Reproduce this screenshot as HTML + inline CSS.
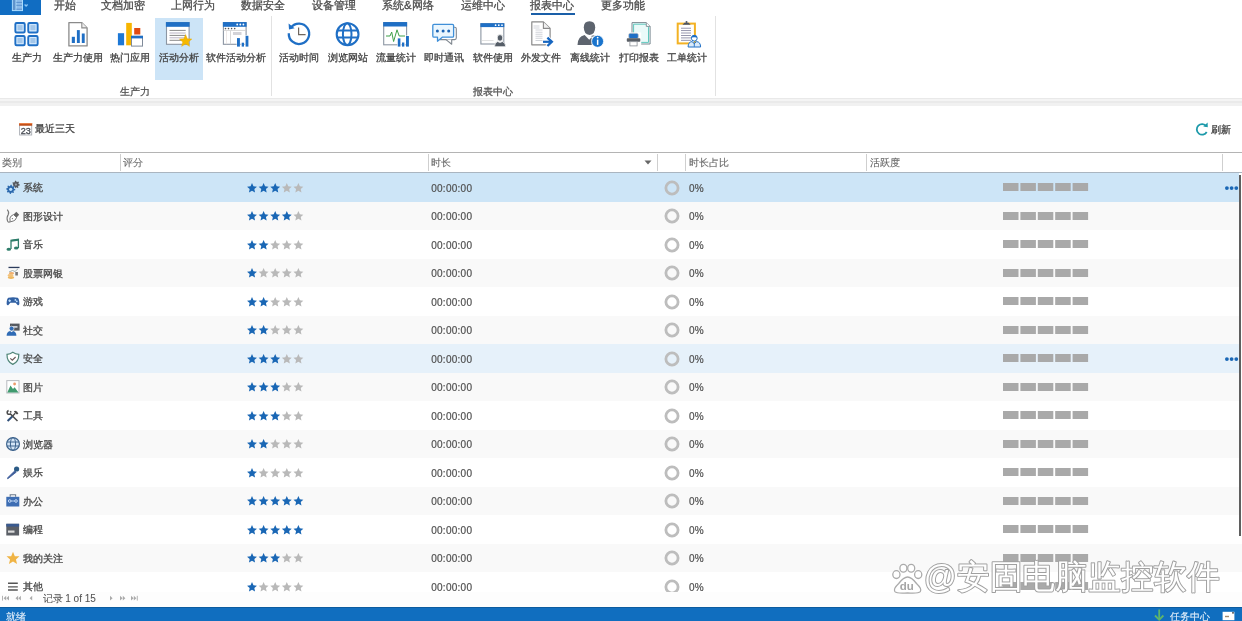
<!DOCTYPE html><html><head><meta charset="utf-8"><style>
*{margin:0;padding:0;box-sizing:border-box}
html,body{width:1242px;height:621px;overflow:hidden;background:#fff;font-family:"Liberation Sans", sans-serif;}
.t{position:absolute;white-space:nowrap;line-height:1;-webkit-text-stroke:0.3px currentColor}
.a{position:absolute}
svg{position:absolute;overflow:visible}
</style></head><body>
<div style="position:absolute;left:0;top:0;width:1242px;height:621px;will-change:transform"><div class="a" style="left:0;top:0;width:41px;height:15px;background:#116dc2"></div><svg style="left:0;top:0" width="41" height="15" viewBox="0 0 41 15"><rect x="12.4" y="-1" width="10.1" height="11.6" fill="#8dbbe9" stroke="#a9dcff" stroke-width="1"/><rect x="12.9" y="-1" width="3" height="11" fill="#5f93cc"/><path d="M16 -1V10.5" stroke="#b5e2ff" stroke-width="0.9"/><path d="M16.3 2.4H22M16.3 5.3H22M16.3 9.2H22" stroke="#4d86c6" stroke-width="0.8"/><path d="M24.6 4.4L26.1 5.9L27.6 4.4" fill="none" stroke="#8ac4f5" stroke-width="1.4"/></svg><div class="t" style="left:53.7px;top:-0.3px;font-size:11.3px;color:#4d4d4d;">开始</div><div class="t" style="left:101.4px;top:-0.3px;font-size:11.3px;color:#4d4d4d;">文档加密</div><div class="t" style="left:171.39999999999998px;top:-0.3px;font-size:11.3px;color:#4d4d4d;">上网行为</div><div class="t" style="left:241.2px;top:-0.3px;font-size:11.3px;color:#4d4d4d;">数据安全</div><div class="t" style="left:311.8px;top:-0.3px;font-size:11.3px;color:#4d4d4d;">设备管理</div><div class="t" style="left:382.09999999999997px;top:-0.3px;font-size:11.3px;color:#4d4d4d;">系统&amp;网络</div><div class="t" style="left:461.2px;top:-0.3px;font-size:11.3px;color:#4d4d4d;">运维中心</div><div class="t" style="left:530.2px;top:-0.3px;font-size:11.3px;color:#4d4d4d;">报表中心</div><div class="t" style="left:600.7px;top:-0.3px;font-size:11.3px;color:#4d4d4d;">更多功能</div><div class="a" style="left:531px;top:13px;width:44px;height:2px;background:#1a5fa8"></div><div class="a" style="left:155px;top:18px;width:48px;height:62px;background:#cce4f7"></div><svg style="left:10px;top:18px" width="34" height="32" viewBox="10 18 34 32"><rect x="15.4" y="23.1" width="9.3" height="9.3" rx="1.2" fill="#a9d0f5" stroke="#1f6fc5" stroke-width="2"/><rect x="17.0" y="24.700000000000003" width="6.1" height="6.1" fill="#a2c6ea" stroke="#dff0ff" stroke-width="0.8"/><rect x="28.3" y="23.1" width="9.3" height="9.3" rx="1.2" fill="#a9d0f5" stroke="#1f6fc5" stroke-width="2"/><rect x="29.900000000000002" y="24.700000000000003" width="6.1" height="6.1" fill="#a2c6ea" stroke="#dff0ff" stroke-width="0.8"/><rect x="15.4" y="36" width="9.3" height="9.3" rx="1.2" fill="#a9d0f5" stroke="#1f6fc5" stroke-width="2"/><rect x="17.0" y="37.6" width="6.1" height="6.1" fill="#a2c6ea" stroke="#dff0ff" stroke-width="0.8"/><rect x="28.3" y="36" width="9.3" height="9.3" rx="1.2" fill="#a9d0f5" stroke="#1f6fc5" stroke-width="2"/><rect x="29.900000000000002" y="37.6" width="6.1" height="6.1" fill="#a2c6ea" stroke="#dff0ff" stroke-width="0.8"/></svg><svg style="left:62px;top:18px" width="34" height="32" viewBox="62 18 34 32"><path d="M68.9 22.6H81.8L87.1 27.9V45.9H68.9Z" fill="#fff" stroke="#8a8a8a" stroke-width="1.3" stroke-linejoin="round"/><path d="M81.8 22.6V27.9H87.1" fill="#eee" stroke="#8a8a8a" stroke-width="1.1"/><rect x="71.8" y="36.8" width="3.1" height="6.2" fill="#1f6fc5"/><rect x="76.9" y="30.1" width="2.9" height="12.9" fill="#1f6fc5"/><rect x="81.8" y="33.5" width="2.9" height="9.5" fill="#1f6fc5"/></svg><svg style="left:112px;top:18px" width="34" height="32" viewBox="112 18 34 32"><rect x="117.9" y="33.2" width="6.2" height="12.1" fill="#1d78d6"/><rect x="126.2" y="22.9" width="5.6" height="22.4" fill="#f7b500"/><rect x="134.2" y="28" width="6.1" height="6.5" fill="#e04a12"/><rect x="131.5" y="36.3" width="11" height="9.8" fill="#fff" stroke="#7f8a99" stroke-width="1"/><rect x="131" y="35.8" width="12" height="2.6" fill="#1f6fc5"/></svg><svg style="left:161px;top:18px" width="34" height="32" viewBox="161 18 34 32"><rect x="166.5" y="22.6" width="22.6" height="21.7" fill="#fff" stroke="#8c96a3" stroke-width="1.1"/><rect x="165.9" y="22.1" width="23.7" height="4.7" fill="#1f6fc5"/><rect x="169.5" y="29.9" width="16.2" height="1" fill="#8a8a8a"/><rect x="169.5" y="32.5" width="16.2" height="1" fill="#b9b3c4"/><rect x="169.5" y="34.9" width="16.2" height="1" fill="#8a8a8a"/><rect x="169.5" y="37.3" width="16.2" height="1" fill="#b9b3c4"/><rect x="169.5" y="39.8" width="16.2" height="1" fill="#8a8a8a"/><path transform="translate(185.6 41) scale(0.68)" d="M0 -9.5L2.6 -3.2L9.2 -2.9L4.2 1.4L5.8 7.9L0 4.3L-5.8 7.9L-4.2 1.4L-9.2 -2.9L-2.6 -3.2Z" fill="#f6b800" stroke="#e8a800" stroke-width="0.6"/></svg><svg style="left:218px;top:18px" width="34" height="32" viewBox="218 18 34 32"><rect x="223.4" y="22.6" width="22.7" height="21.7" fill="#fff" stroke="#8c96a3" stroke-width="1.1"/><rect x="222.9" y="22.1" width="23.7" height="4.7" fill="#1f6fc5"/><circle cx="237.2" cy="24.5" r="0.9" fill="#fff"/><circle cx="240.3" cy="24.5" r="0.9" fill="#fff"/><circle cx="243.4" cy="24.5" r="0.9" fill="#fff"/><circle cx="225.5" cy="28.6" r="0.8" fill="#555"/><circle cx="228.5" cy="28.6" r="0.8" fill="#555"/><circle cx="231.6" cy="28.6" r="0.8" fill="#555"/><circle cx="234.7" cy="28.6" r="0.8" fill="#555"/><rect x="223.4" y="29.9" width="22.7" height="0.8" fill="#c9c9c9"/><rect x="230" y="30.5" width="0.8" height="13.7" fill="#cfcfcf"/><rect x="226.4" y="30.5" width="0.6" height="13.7" fill="#e3dbd9"/><rect x="233" y="32" width="8.5" height="3" fill="#d3d3d8"/><rect x="236.6" y="37.6" width="3.8" height="9.4" fill="#fff"/><rect x="241.2" y="42.2" width="3.3" height="4.8" fill="#fff"/><rect x="245.1" y="35.3" width="3.8" height="11.7" fill="#fff"/><rect x="237" y="38.1" width="2.9" height="8.5" fill="#1f6fc5"/><rect x="241.7" y="42.7" width="2.3" height="3.9" fill="#1f6fc5"/><rect x="245.6" y="35.8" width="2.8" height="10.8" fill="#1f6fc5"/></svg><svg style="left:282px;top:18px" width="34" height="32" viewBox="282 18 34 32"><path d="M288.8 33.2A10.2 10.2 0 1 0 290.9 27.6" fill="none" stroke="#1f6fc5" stroke-width="2.3"/><path d="M288.6 23.6L289.0 29.6L294.6 28.2Z" fill="#1f6fc5"/><path d="M298.6 27.4V34.6H305.6" fill="none" stroke="#6f665e" stroke-width="1.2"/></svg><svg style="left:330px;top:18px" width="34" height="32" viewBox="330 18 34 32"><circle cx="347.6" cy="34.2" r="10.9" fill="none" stroke="#1f6fc5" stroke-width="2.1"/><ellipse cx="347.2" cy="34.2" rx="4.3" ry="10.9" fill="none" stroke="#1f6fc5" stroke-width="2"/><path d="M337.5 30.4H357.8M337.5 37.4H357.8" stroke="#1f6fc5" stroke-width="2"/></svg><svg style="left:378px;top:18px" width="34" height="32" viewBox="378 18 34 32"><rect x="383.7" y="22.6" width="22.9" height="22.2" fill="#fff" stroke="#8c96a3" stroke-width="1.1"/><rect x="383.2" y="22.1" width="23.9" height="4.4" fill="#1f6fc5"/><path d="M386 36H390L391.7 32L393.6 41.5L397 29.8L399.2 36H405" fill="none" stroke="#3fa04a" stroke-width="1"/><rect x="397.3" y="37.9" width="3.6" height="9.2" fill="#fff"/><rect x="401.5" y="42" width="3.3" height="5.1" fill="#fff"/><rect x="405.5" y="35.5" width="3.9" height="11.6" fill="#fff"/><rect x="397.8" y="38.4" width="2.6" height="8.2" fill="#1f6fc5"/><rect x="402" y="42.5" width="2.3" height="4.1" fill="#1f6fc5"/><rect x="406" y="36" width="2.9" height="10.6" fill="#1f6fc5"/></svg><svg style="left:428px;top:18px" width="34" height="32" viewBox="428 18 34 32"><path d="M440 39.6H454.7Q456.3 39.6 456.3 38V28.8Q456.3 27.3 454.7 27.3H453" fill="none" stroke="#808890" stroke-width="1.1"/><path d="M446 39.6L451.7 44.2V39.6" fill="#fff" stroke="#808890" stroke-width="1.1" stroke-linejoin="round"/><path d="M434 24.4H452.4Q453.6 24.4 453.6 25.6V36Q453.6 37.2 452.4 37.2H442.3L437.5 41.2V37.2H434Q432.8 37.2 432.8 36V25.6Q432.8 24.4 434 24.4Z" fill="#eaf6fe" stroke="#3f8fd8" stroke-width="1.3" stroke-linejoin="round"/><circle cx="437.4" cy="31.1" r="1.5" fill="#1b63b3"/><circle cx="443.1" cy="31.1" r="1.5" fill="#1b63b3"/><circle cx="448.7" cy="31.1" r="1.5" fill="#1b63b3"/></svg><svg style="left:476px;top:18px" width="34" height="32" viewBox="476 18 34 32"><rect x="480.9" y="23.7" width="22.9" height="20.3" fill="#fff" stroke="#8c96a3" stroke-width="1.1"/><rect x="480.4" y="23.2" width="23.9" height="3.9" fill="#1f6fc5"/><circle cx="495.6" cy="25.2" r="0.85" fill="#fff"/><circle cx="498.8" cy="25.2" r="0.85" fill="#fff"/><circle cx="502" cy="25.2" r="0.85" fill="#fff"/><rect x="481.5" y="40.2" width="12" height="0.7" fill="#d7d7d7"/><path d="M494.4 46.8Q494.6 42.3 497.6 41.6L500 42.4L502.4 41.6Q505.6 42.3 505.8 46.8Z" fill="#555d67" stroke="#fff" stroke-width="0.8"/><ellipse cx="500" cy="37.9" rx="2.8" ry="3.3" fill="#555d67" stroke="#fff" stroke-width="0.8"/></svg><svg style="left:526px;top:18px" width="34" height="32" viewBox="526 18 34 32"><path d="M531.8 21.9H543.4L550.1 28.4V44.8H531.8Z" fill="#fff" stroke="#8a8a8a" stroke-width="1.2" stroke-linejoin="round"/><path d="M543.4 21.9V28.4H550.1" fill="#f0f0f0" stroke="#8a8a8a" stroke-width="1.1"/><rect x="533.5" y="25.6" width="6" height="0.8" fill="#c5c8cf"/><rect x="533.5" y="27.6" width="6" height="0.8" fill="#c5c8cf"/><rect x="535.5" y="29.6" width="7" height="0.8" fill="#c5c8cf"/><rect x="535.5" y="31.8" width="7" height="0.8" fill="#c5c8cf"/><rect x="535.5" y="33.8" width="7" height="0.8" fill="#c5c8cf"/><rect x="535.5" y="35.8" width="7" height="0.8" fill="#c5c8cf"/><rect x="535.5" y="37.8" width="7" height="0.8" fill="#c5c8cf"/><rect x="535.5" y="40" width="7" height="0.8" fill="#c5c8cf"/><path d="M543.2 41.8H551.5" stroke="#fff" stroke-width="4"/><path d="M546.8 37L551.5 41.8L546.8 46.6" fill="none" stroke="#fff" stroke-width="4"/><path d="M543 41.8H552" stroke="#1766c0" stroke-width="2.2"/><path d="M547.4 37.6L551.8 41.8L547.4 46" fill="none" stroke="#1766c0" stroke-width="2.4"/></svg><svg style="left:573px;top:18px" width="34" height="32" viewBox="573 18 34 32"><path d="M577.5 45Q577.5 36.4 584.6 34.9L589.2 39.7L591.7 37.2V45Z" fill="#5d646e"/><path d="M589.5 21.2Q595.2 21.2 595.2 27.3Q595.2 34.5 589.5 35Q583.8 34.5 583.8 27.3Q583.8 21.2 589.5 21.2Z" fill="#5d646e"/><path d="M591.5 36.3Q594.2 35.3 595.2 36.6" fill="none" stroke="#5d646e" stroke-width="1"/><circle cx="597.6" cy="41.3" r="6" fill="#1a74cc" stroke="#fff" stroke-width="0.8"/><rect x="596.9" y="39.6" width="1.5" height="5.3" fill="#fff"/><circle cx="597.65" cy="37.6" r="0.9" fill="#fff"/></svg><svg style="left:622px;top:18px" width="34" height="32" viewBox="622 18 34 32"><path d="M632 22.6H646.3L650.1 26.4V44H632Z" fill="#f2fbfb" stroke="#7d8a92" stroke-width="1"/><path d="M633.6 24.2H645.6L648.5 27.1V42.4H633.6Z" fill="#eafaf9" stroke="#5fc7bd" stroke-width="1"/><path d="M646.3 22.6V26.4H650.1" fill="#fff" stroke="#7d8a92" stroke-width="0.9"/><rect x="627.2" y="32.4" width="14" height="13.6" fill="#fff"/><rect x="628.7" y="33.3" width="9.6" height="5.3" rx="1.5" fill="#1f6fc5" stroke="#ccc" stroke-width="0.7"/><rect x="626.8" y="38.2" width="13.5" height="3.6" rx="0.8" fill="#5a5f66"/><rect x="629.9" y="41.7" width="7.2" height="4.2" fill="#fff" stroke="#8a8f96" stroke-width="0.8"/></svg><svg style="left:670px;top:18px" width="34" height="32" viewBox="670 18 34 32"><rect x="677.7" y="23.6" width="17.2" height="19.8" fill="#fff" stroke="#f3b224" stroke-width="2"/><path d="M682.4 24.8L684.5 22.7H688.6L690.7 24.8Z" fill="#4b5466"/><circle cx="686.5" cy="22" r="1" fill="#4b5466"/><rect x="681" y="27.75" width="10" height="0.9" fill="#8c8ca4"/><rect x="681" y="30.150000000000002" width="10" height="0.9" fill="#8c8ca4"/><rect x="681" y="32.55" width="10" height="0.9" fill="#8c8ca4"/><rect x="681" y="35.05" width="10" height="0.9" fill="#8c8ca4"/><rect x="681" y="37.449999999999996" width="10" height="0.9" fill="#8c8ca4"/><rect x="681" y="39.849999999999994" width="10" height="0.9" fill="#8c8ca4"/><path d="M688.1 47Q688.1 42 692 41.6L694.3 43.6L696.6 41.6Q700.6 42 700.6 47Z" fill="#dbeaf9" stroke="#1f6fc5" stroke-width="1"/><path d="M694.3 42.8V46.8" stroke="#1f6fc5" stroke-width="0.9"/><circle cx="694.3" cy="38.2" r="2.9" fill="#fff" stroke="#1f6fc5" stroke-width="1"/><path d="M691.4 37.6Q691.7 35 694.3 35.1Q696.9 35 697.2 37.6Q694.3 37 691.4 37.6Z" fill="#1f6fc5"/></svg><div class="t" style="left:-13.2px;width:80px;text-align:center;top:53.3px;font-size:10px;color:#444">生产力</div><div class="t" style="left:38px;width:80px;text-align:center;top:53.3px;font-size:10px;color:#444">生产力使用</div><div class="t" style="left:90px;width:80px;text-align:center;top:53.3px;font-size:10px;color:#444">热门应用</div><div class="t" style="left:138.6px;width:80px;text-align:center;top:53.3px;font-size:10px;color:#444">活动分析</div><div class="t" style="left:195.9px;width:80px;text-align:center;top:53.3px;font-size:10px;color:#444">软件活动分析</div><div class="t" style="left:258.9px;width:80px;text-align:center;top:53.3px;font-size:10px;color:#444">活动时间</div><div class="t" style="left:307.5px;width:80px;text-align:center;top:53.3px;font-size:10px;color:#444">浏览网站</div><div class="t" style="left:356.2px;width:80px;text-align:center;top:53.3px;font-size:10px;color:#444">流量统计</div><div class="t" style="left:404.4px;width:80px;text-align:center;top:53.3px;font-size:10px;color:#444">即时通讯</div><div class="t" style="left:453.2px;width:80px;text-align:center;top:53.3px;font-size:10px;color:#444">软件使用</div><div class="t" style="left:501.29999999999995px;width:80px;text-align:center;top:53.3px;font-size:10px;color:#444">外发文件</div><div class="t" style="left:550px;width:80px;text-align:center;top:53.3px;font-size:10px;color:#444">离线统计</div><div class="t" style="left:599.1px;width:80px;text-align:center;top:53.3px;font-size:10px;color:#444">打印报表</div><div class="t" style="left:646.9px;width:80px;text-align:center;top:53.3px;font-size:10px;color:#444">工单统计</div><div class="t" style="left:95px;width:80px;text-align:center;top:87.4px;font-size:10px;color:#555">生产力</div><div class="t" style="left:453.3px;width:80px;text-align:center;top:87.4px;font-size:10px;color:#555">报表中心</div><div class="a" style="left:271px;top:16px;width:1px;height:80px;background:#e2e2e2"></div><div class="a" style="left:715px;top:16px;width:1px;height:80px;background:#e2e2e2"></div><div class="a" style="left:0;top:98px;width:1242px;height:7.5px;background:linear-gradient(#e9e9e9 0,#e9e9e9 1.5px,#f4f4f4 1.5px,#f4f4f4 3.2px,#eaeaea 3.2px,#eaeaea 4.6px,#f1f1f1 4.6px)"></div><svg style="left:15px;top:118px" width="25" height="22" viewBox="15 118 25 22"><rect x="19.6" y="125" width="12.1" height="10" fill="#fff" stroke="#a9adb3" stroke-width="0.9"/><rect x="19.1" y="123.1" width="13.1" height="2.6" fill="#c4501a"/><rect x="19.1" y="123.1" width="13.1" height="0.8" fill="#f08a50"/><text x="25.7" y="134.4" font-size="9" text-anchor="middle" fill="#4a4f57" stroke="#4a4f57" stroke-width="0.35" font-family="Liberation Sans">23</text></svg><div class="t" style="left:35px;top:124.3px;font-size:9.8px;color:#444;">最近三天</div><svg style="left:1190px;top:118px" width="22" height="22" viewBox="1190 118 22 22"><path d="M1206.3 126.2A5.3 5.3 0 1 0 1206.7 132" fill="none" stroke="#1d9aaa" stroke-width="1.8"/><path d="M1203.3 126.6L1207.8 127.2L1207.6 122.6Z" fill="#1d9aaa"/></svg><div class="t" style="left:1211px;top:124.5px;font-size:9.8px;color:#444;">刷新</div><div class="a" style="left:0;top:152px;width:1242px;height:1px;background:#b4b4b4"></div><div class="a" style="left:0;top:172.2px;width:1242px;height:1.2px;background:#aab5c0"></div><div class="a" style="left:120px;top:154px;width:1px;height:17px;background:#cfcfcf"></div><div class="a" style="left:428px;top:154px;width:1px;height:17px;background:#cfcfcf"></div><div class="a" style="left:657px;top:154px;width:1px;height:17px;background:#cfcfcf"></div><div class="a" style="left:685px;top:154px;width:1px;height:17px;background:#cfcfcf"></div><div class="a" style="left:866px;top:154px;width:1px;height:17px;background:#cfcfcf"></div><div class="a" style="left:1222px;top:154px;width:1px;height:17px;background:#cfcfcf"></div><div class="t" style="left:2px;top:158.2px;font-size:10px;color:#666;-webkit-text-stroke:0.1px #666">类别</div><div class="t" style="left:123px;top:158.2px;font-size:10px;color:#666;-webkit-text-stroke:0.1px #666">评分</div><div class="t" style="left:431px;top:158.2px;font-size:10px;color:#666;-webkit-text-stroke:0.1px #666">时长</div><div class="t" style="left:689px;top:158.2px;font-size:10px;color:#666;-webkit-text-stroke:0.1px #666">时长占比</div><div class="t" style="left:870px;top:158.2px;font-size:10px;color:#666;-webkit-text-stroke:0.1px #666">活跃度</div><svg style="left:644px;top:160px" width="8" height="5"><path d="M0.5 0.5H7.5L4 4.6Z" fill="#666"/></svg><div class="a" style="left:0;top:173.0px;width:1242px;height:28.5px;background:#cde5f7"></div><svg style="left:3px;top:178px" width="20" height="20" viewBox="0 0 20 20"><polygon points="16.80,6.60 16.70,7.47 15.42,7.81 15.09,8.35 15.33,9.65 14.59,10.11 13.52,9.33 12.90,9.40 12.03,10.40 11.21,10.11 11.15,8.79 10.71,8.35 9.39,8.29 9.10,7.47 10.10,6.60 10.17,5.98 9.39,4.91 9.85,4.17 11.15,4.41 11.69,4.08 12.03,2.80 12.90,2.70 13.52,3.87 14.11,4.08 15.33,3.55 15.95,4.17 15.42,5.39 15.63,5.98" fill="#55595f"/><circle cx="12.9" cy="6.6" r="1.1" fill="#9aa3ad"/><circle cx="7.7" cy="11.3" r="4.6" fill="#cde5f7"/><polygon points="12.30,11.30 12.21,12.20 10.84,12.60 10.53,13.19 10.95,14.55 10.26,15.12 9.00,14.44 8.36,14.63 7.70,15.90 6.80,15.81 6.40,14.44 5.81,14.13 4.45,14.55 3.88,13.86 4.56,12.60 4.37,11.96 3.10,11.30 3.19,10.40 4.56,10.00 4.87,9.41 4.45,8.05 5.14,7.48 6.40,8.16 7.04,7.97 7.70,6.70 8.60,6.79 9.00,8.16 9.59,8.47 10.95,8.05 11.52,8.74 10.84,10.00 11.03,10.64" fill="#2b68ad"/><circle cx="7.7" cy="11.3" r="1.6" fill="#bfe3ff"/></svg><div class="t" style="left:23.3px;top:183.45px;font-size:10px;color:#4a4a4a;">系统</div><svg style="left:246.5px;top:182.95px" width="60" height="10"><path transform="translate(0.0,0)" d="M5.00 0.10L6.44 3.32L9.95 3.69L7.33 6.06L8.06 9.51L5.00 7.75L1.94 9.51L2.67 6.06L0.05 3.69L3.56 3.32Z" fill="#1a67b5"/><path transform="translate(11.6,0)" d="M5.00 0.10L6.44 3.32L9.95 3.69L7.33 6.06L8.06 9.51L5.00 7.75L1.94 9.51L2.67 6.06L0.05 3.69L3.56 3.32Z" fill="#1a67b5"/><path transform="translate(23.2,0)" d="M5.00 0.10L6.44 3.32L9.95 3.69L7.33 6.06L8.06 9.51L5.00 7.75L1.94 9.51L2.67 6.06L0.05 3.69L3.56 3.32Z" fill="#1a67b5"/><path transform="translate(34.8,0)" d="M5.00 0.10L6.44 3.32L9.95 3.69L7.33 6.06L8.06 9.51L5.00 7.75L1.94 9.51L2.67 6.06L0.05 3.69L3.56 3.32Z" fill="#b9b9b9"/><path transform="translate(46.4,0)" d="M5.00 0.10L6.44 3.32L9.95 3.69L7.33 6.06L8.06 9.51L5.00 7.75L1.94 9.51L2.67 6.06L0.05 3.69L3.56 3.32Z" fill="#b9b9b9"/></svg><div class="t" style="left:431.2px;top:183.85px;font-size:10px;color:#505050;letter-spacing:0.27px;-webkit-text-stroke:0.2px #505050">00:00:00</div><svg style="left:664px;top:179.75px" width="16" height="16"><circle cx="8" cy="8" r="6.1" fill="none" stroke="#bdbdbd" stroke-width="2.8"/></svg><div class="t" style="left:689px;top:183.85px;font-size:10px;color:#505050;letter-spacing:0.3px;-webkit-text-stroke:0.2px #505050">0%</div><svg style="left:1002.5px;top:183.25px" width="86" height="8"><rect x="0.0" y="0" width="15.5" height="8" fill="#a9a9a9"/><rect x="17.4" y="0" width="15.5" height="8" fill="#a9a9a9"/><rect x="34.8" y="0" width="15.5" height="8" fill="#a9a9a9"/><rect x="52.199999999999996" y="0" width="15.5" height="8" fill="#a9a9a9"/><rect x="69.6" y="0" width="15.5" height="8" fill="#a9a9a9"/></svg><svg style="left:1224px;top:186.05px" width="16" height="5"><circle cx="2.9" cy="2.1" r="1.9" fill="#1a67b5"/><circle cx="7.6" cy="2.1" r="1.9" fill="#1a67b5"/><circle cx="12.3" cy="2.1" r="1.9" fill="#1a67b5"/></svg><div class="a" style="left:0;top:201.5px;width:1242px;height:28.5px;background:#f9f9f9"></div><svg style="left:3px;top:206px" width="20" height="20" viewBox="0 0 20 20"><path d="M4.2 3.6Q6.6 6.2 5.2 8.6Q3.2 11.8 4.6 15.2Q5.6 16.8 7.2 15.8" fill="none" stroke="#777" stroke-width="1.1"/><path d="M7.2 15.8L6.9 12.1Q7.6 9.6 10.6 8.6L13.6 11.4Q12.6 14.6 10.1 15.1Z" fill="#fff" stroke="#777" stroke-width="1"/><path d="M10.6 8.6L13.3 5.8L16.2 8.8L13.6 11.4Z" fill="#666"/><circle cx="9.4" cy="12.6" r="0.7" fill="#777"/></svg><div class="t" style="left:23.3px;top:211.95px;font-size:10px;color:#4a4a4a;">图形设计</div><svg style="left:246.5px;top:211.45px" width="60" height="10"><path transform="translate(0.0,0)" d="M5.00 0.10L6.44 3.32L9.95 3.69L7.33 6.06L8.06 9.51L5.00 7.75L1.94 9.51L2.67 6.06L0.05 3.69L3.56 3.32Z" fill="#1a67b5"/><path transform="translate(11.6,0)" d="M5.00 0.10L6.44 3.32L9.95 3.69L7.33 6.06L8.06 9.51L5.00 7.75L1.94 9.51L2.67 6.06L0.05 3.69L3.56 3.32Z" fill="#1a67b5"/><path transform="translate(23.2,0)" d="M5.00 0.10L6.44 3.32L9.95 3.69L7.33 6.06L8.06 9.51L5.00 7.75L1.94 9.51L2.67 6.06L0.05 3.69L3.56 3.32Z" fill="#1a67b5"/><path transform="translate(34.8,0)" d="M5.00 0.10L6.44 3.32L9.95 3.69L7.33 6.06L8.06 9.51L5.00 7.75L1.94 9.51L2.67 6.06L0.05 3.69L3.56 3.32Z" fill="#1a67b5"/><path transform="translate(46.4,0)" d="M5.00 0.10L6.44 3.32L9.95 3.69L7.33 6.06L8.06 9.51L5.00 7.75L1.94 9.51L2.67 6.06L0.05 3.69L3.56 3.32Z" fill="#b9b9b9"/></svg><div class="t" style="left:431.2px;top:212.35px;font-size:10px;color:#505050;letter-spacing:0.27px;-webkit-text-stroke:0.2px #505050">00:00:00</div><svg style="left:664px;top:208.25px" width="16" height="16"><circle cx="8" cy="8" r="6.1" fill="none" stroke="#bdbdbd" stroke-width="2.8"/></svg><div class="t" style="left:689px;top:212.35px;font-size:10px;color:#505050;letter-spacing:0.3px;-webkit-text-stroke:0.2px #505050">0%</div><svg style="left:1002.5px;top:211.75px" width="86" height="8"><rect x="0.0" y="0" width="15.5" height="8" fill="#a9a9a9"/><rect x="17.4" y="0" width="15.5" height="8" fill="#a9a9a9"/><rect x="34.8" y="0" width="15.5" height="8" fill="#a9a9a9"/><rect x="52.199999999999996" y="0" width="15.5" height="8" fill="#a9a9a9"/><rect x="69.6" y="0" width="15.5" height="8" fill="#a9a9a9"/></svg><div class="a" style="left:0;top:230.0px;width:1242px;height:28.5px;background:#ffffff"></div><svg style="left:3px;top:235px" width="20" height="20" viewBox="0 0 20 20"><path d="M8 14V5.3L15.4 4.3V13" fill="none" stroke="#2e7d6a" stroke-width="1.3"/><path d="M8 5.8L15.4 4.8" stroke="#2e7d6a" stroke-width="1.8"/><ellipse cx="5.8" cy="14.3" rx="2.3" ry="1.5" fill="#2e7d6a"/><ellipse cx="13.2" cy="13.1" rx="2.3" ry="1.5" fill="#2e7d6a"/></svg><div class="t" style="left:23.3px;top:240.45px;font-size:10px;color:#4a4a4a;">音乐</div><svg style="left:246.5px;top:239.95px" width="60" height="10"><path transform="translate(0.0,0)" d="M5.00 0.10L6.44 3.32L9.95 3.69L7.33 6.06L8.06 9.51L5.00 7.75L1.94 9.51L2.67 6.06L0.05 3.69L3.56 3.32Z" fill="#1a67b5"/><path transform="translate(11.6,0)" d="M5.00 0.10L6.44 3.32L9.95 3.69L7.33 6.06L8.06 9.51L5.00 7.75L1.94 9.51L2.67 6.06L0.05 3.69L3.56 3.32Z" fill="#1a67b5"/><path transform="translate(23.2,0)" d="M5.00 0.10L6.44 3.32L9.95 3.69L7.33 6.06L8.06 9.51L5.00 7.75L1.94 9.51L2.67 6.06L0.05 3.69L3.56 3.32Z" fill="#b9b9b9"/><path transform="translate(34.8,0)" d="M5.00 0.10L6.44 3.32L9.95 3.69L7.33 6.06L8.06 9.51L5.00 7.75L1.94 9.51L2.67 6.06L0.05 3.69L3.56 3.32Z" fill="#b9b9b9"/><path transform="translate(46.4,0)" d="M5.00 0.10L6.44 3.32L9.95 3.69L7.33 6.06L8.06 9.51L5.00 7.75L1.94 9.51L2.67 6.06L0.05 3.69L3.56 3.32Z" fill="#b9b9b9"/></svg><div class="t" style="left:431.2px;top:240.85px;font-size:10px;color:#505050;letter-spacing:0.27px;-webkit-text-stroke:0.2px #505050">00:00:00</div><svg style="left:664px;top:236.75px" width="16" height="16"><circle cx="8" cy="8" r="6.1" fill="none" stroke="#bdbdbd" stroke-width="2.8"/></svg><div class="t" style="left:689px;top:240.85px;font-size:10px;color:#505050;letter-spacing:0.3px;-webkit-text-stroke:0.2px #505050">0%</div><svg style="left:1002.5px;top:240.25px" width="86" height="8"><rect x="0.0" y="0" width="15.5" height="8" fill="#a9a9a9"/><rect x="17.4" y="0" width="15.5" height="8" fill="#a9a9a9"/><rect x="34.8" y="0" width="15.5" height="8" fill="#a9a9a9"/><rect x="52.199999999999996" y="0" width="15.5" height="8" fill="#a9a9a9"/><rect x="69.6" y="0" width="15.5" height="8" fill="#a9a9a9"/></svg><div class="a" style="left:0;top:258.5px;width:1242px;height:28.5px;background:#f9f9f9"></div><svg style="left:3px;top:263px" width="20" height="20" viewBox="0 0 20 20"><rect x="5.5" y="3.8" width="11" height="1.3" fill="#2b3b5c"/><path d="M6 9L9.5 7.5L12 8.5L15 5.8" fill="none" stroke="#9aa" stroke-width="0.9"/><rect x="12.3" y="9" width="2.6" height="3.5" fill="#777"/><ellipse cx="8.5" cy="10.2" rx="2.6" ry="1.2" fill="#f0b070"/><ellipse cx="7.5" cy="12.4" rx="3" ry="1.3" fill="#f3c27a"/><ellipse cx="8" cy="14.6" rx="3.2" ry="1.4" fill="#eeb860"/></svg><div class="t" style="left:23.3px;top:268.95px;font-size:10px;color:#4a4a4a;">股票网银</div><svg style="left:246.5px;top:268.45px" width="60" height="10"><path transform="translate(0.0,0)" d="M5.00 0.10L6.44 3.32L9.95 3.69L7.33 6.06L8.06 9.51L5.00 7.75L1.94 9.51L2.67 6.06L0.05 3.69L3.56 3.32Z" fill="#1a67b5"/><path transform="translate(11.6,0)" d="M5.00 0.10L6.44 3.32L9.95 3.69L7.33 6.06L8.06 9.51L5.00 7.75L1.94 9.51L2.67 6.06L0.05 3.69L3.56 3.32Z" fill="#b9b9b9"/><path transform="translate(23.2,0)" d="M5.00 0.10L6.44 3.32L9.95 3.69L7.33 6.06L8.06 9.51L5.00 7.75L1.94 9.51L2.67 6.06L0.05 3.69L3.56 3.32Z" fill="#b9b9b9"/><path transform="translate(34.8,0)" d="M5.00 0.10L6.44 3.32L9.95 3.69L7.33 6.06L8.06 9.51L5.00 7.75L1.94 9.51L2.67 6.06L0.05 3.69L3.56 3.32Z" fill="#b9b9b9"/><path transform="translate(46.4,0)" d="M5.00 0.10L6.44 3.32L9.95 3.69L7.33 6.06L8.06 9.51L5.00 7.75L1.94 9.51L2.67 6.06L0.05 3.69L3.56 3.32Z" fill="#b9b9b9"/></svg><div class="t" style="left:431.2px;top:269.35px;font-size:10px;color:#505050;letter-spacing:0.27px;-webkit-text-stroke:0.2px #505050">00:00:00</div><svg style="left:664px;top:265.25px" width="16" height="16"><circle cx="8" cy="8" r="6.1" fill="none" stroke="#bdbdbd" stroke-width="2.8"/></svg><div class="t" style="left:689px;top:269.35px;font-size:10px;color:#505050;letter-spacing:0.3px;-webkit-text-stroke:0.2px #505050">0%</div><svg style="left:1002.5px;top:268.75px" width="86" height="8"><rect x="0.0" y="0" width="15.5" height="8" fill="#a9a9a9"/><rect x="17.4" y="0" width="15.5" height="8" fill="#a9a9a9"/><rect x="34.8" y="0" width="15.5" height="8" fill="#a9a9a9"/><rect x="52.199999999999996" y="0" width="15.5" height="8" fill="#a9a9a9"/><rect x="69.6" y="0" width="15.5" height="8" fill="#a9a9a9"/></svg><div class="a" style="left:0;top:287.0px;width:1242px;height:28.5px;background:#ffffff"></div><svg style="left:3px;top:292px" width="20" height="20" viewBox="0 0 20 20"><path d="M5.3 5.8Q10 4.8 14.7 5.8Q16.3 7 16.4 11.5Q16.3 13.8 14.8 13.2L12.6 10.8H7.4L5.2 13.2Q3.7 13.8 3.6 11.5Q3.7 7 5.3 5.8Z" fill="#3261a3"/><path d="M6.7 7.2L8.2 8.7L6.7 10.2L5.2 8.7Z" fill="#bfe0ff"/><circle cx="12.4" cy="7.9" r="0.9" fill="#bfe0ff"/><circle cx="13.8" cy="9.3" r="0.9" fill="#bfe0ff"/></svg><div class="t" style="left:23.3px;top:297.45px;font-size:10px;color:#4a4a4a;">游戏</div><svg style="left:246.5px;top:296.95px" width="60" height="10"><path transform="translate(0.0,0)" d="M5.00 0.10L6.44 3.32L9.95 3.69L7.33 6.06L8.06 9.51L5.00 7.75L1.94 9.51L2.67 6.06L0.05 3.69L3.56 3.32Z" fill="#1a67b5"/><path transform="translate(11.6,0)" d="M5.00 0.10L6.44 3.32L9.95 3.69L7.33 6.06L8.06 9.51L5.00 7.75L1.94 9.51L2.67 6.06L0.05 3.69L3.56 3.32Z" fill="#1a67b5"/><path transform="translate(23.2,0)" d="M5.00 0.10L6.44 3.32L9.95 3.69L7.33 6.06L8.06 9.51L5.00 7.75L1.94 9.51L2.67 6.06L0.05 3.69L3.56 3.32Z" fill="#b9b9b9"/><path transform="translate(34.8,0)" d="M5.00 0.10L6.44 3.32L9.95 3.69L7.33 6.06L8.06 9.51L5.00 7.75L1.94 9.51L2.67 6.06L0.05 3.69L3.56 3.32Z" fill="#b9b9b9"/><path transform="translate(46.4,0)" d="M5.00 0.10L6.44 3.32L9.95 3.69L7.33 6.06L8.06 9.51L5.00 7.75L1.94 9.51L2.67 6.06L0.05 3.69L3.56 3.32Z" fill="#b9b9b9"/></svg><div class="t" style="left:431.2px;top:297.85px;font-size:10px;color:#505050;letter-spacing:0.27px;-webkit-text-stroke:0.2px #505050">00:00:00</div><svg style="left:664px;top:293.75px" width="16" height="16"><circle cx="8" cy="8" r="6.1" fill="none" stroke="#bdbdbd" stroke-width="2.8"/></svg><div class="t" style="left:689px;top:297.85px;font-size:10px;color:#505050;letter-spacing:0.3px;-webkit-text-stroke:0.2px #505050">0%</div><svg style="left:1002.5px;top:297.25px" width="86" height="8"><rect x="0.0" y="0" width="15.5" height="8" fill="#a9a9a9"/><rect x="17.4" y="0" width="15.5" height="8" fill="#a9a9a9"/><rect x="34.8" y="0" width="15.5" height="8" fill="#a9a9a9"/><rect x="52.199999999999996" y="0" width="15.5" height="8" fill="#a9a9a9"/><rect x="69.6" y="0" width="15.5" height="8" fill="#a9a9a9"/></svg><div class="a" style="left:0;top:315.5px;width:1242px;height:28.5px;background:#f9f9f9"></div><svg style="left:3px;top:320px" width="20" height="20" viewBox="0 0 20 20"><rect x="7" y="3.6" width="9.6" height="7" fill="#55595f"/><rect x="9.5" y="6" width="5" height="1.8" fill="#c9ced6"/><path d="M3.6 15.8Q3.8 11.4 7.2 11L8.6 12.2L10 11Q13.2 11.4 13.4 15.8Z" fill="#2f6bb5"/><circle cx="8.6" cy="8.6" r="2.4" fill="#2f6bb5" stroke="#fff" stroke-width="0.6"/></svg><div class="t" style="left:23.3px;top:325.95px;font-size:10px;color:#4a4a4a;">社交</div><svg style="left:246.5px;top:325.45px" width="60" height="10"><path transform="translate(0.0,0)" d="M5.00 0.10L6.44 3.32L9.95 3.69L7.33 6.06L8.06 9.51L5.00 7.75L1.94 9.51L2.67 6.06L0.05 3.69L3.56 3.32Z" fill="#1a67b5"/><path transform="translate(11.6,0)" d="M5.00 0.10L6.44 3.32L9.95 3.69L7.33 6.06L8.06 9.51L5.00 7.75L1.94 9.51L2.67 6.06L0.05 3.69L3.56 3.32Z" fill="#1a67b5"/><path transform="translate(23.2,0)" d="M5.00 0.10L6.44 3.32L9.95 3.69L7.33 6.06L8.06 9.51L5.00 7.75L1.94 9.51L2.67 6.06L0.05 3.69L3.56 3.32Z" fill="#b9b9b9"/><path transform="translate(34.8,0)" d="M5.00 0.10L6.44 3.32L9.95 3.69L7.33 6.06L8.06 9.51L5.00 7.75L1.94 9.51L2.67 6.06L0.05 3.69L3.56 3.32Z" fill="#b9b9b9"/><path transform="translate(46.4,0)" d="M5.00 0.10L6.44 3.32L9.95 3.69L7.33 6.06L8.06 9.51L5.00 7.75L1.94 9.51L2.67 6.06L0.05 3.69L3.56 3.32Z" fill="#b9b9b9"/></svg><div class="t" style="left:431.2px;top:326.35px;font-size:10px;color:#505050;letter-spacing:0.27px;-webkit-text-stroke:0.2px #505050">00:00:00</div><svg style="left:664px;top:322.25px" width="16" height="16"><circle cx="8" cy="8" r="6.1" fill="none" stroke="#bdbdbd" stroke-width="2.8"/></svg><div class="t" style="left:689px;top:326.35px;font-size:10px;color:#505050;letter-spacing:0.3px;-webkit-text-stroke:0.2px #505050">0%</div><svg style="left:1002.5px;top:325.75px" width="86" height="8"><rect x="0.0" y="0" width="15.5" height="8" fill="#a9a9a9"/><rect x="17.4" y="0" width="15.5" height="8" fill="#a9a9a9"/><rect x="34.8" y="0" width="15.5" height="8" fill="#a9a9a9"/><rect x="52.199999999999996" y="0" width="15.5" height="8" fill="#a9a9a9"/><rect x="69.6" y="0" width="15.5" height="8" fill="#a9a9a9"/></svg><div class="a" style="left:0;top:344.0px;width:1242px;height:28.5px;background:#e6f1fa"></div><svg style="left:3px;top:349px" width="20" height="20" viewBox="0 0 20 20"><path d="M9.8 3.2Q12.5 5 15.8 5.4Q16 12.5 9.8 15.4Q3.8 12.5 4 5.4Q7.2 5 9.8 3.2Z" fill="#fff" stroke="#4f8577" stroke-width="1.2"/><path d="M7.3 9.4L9.3 11.2L12.6 8" fill="none" stroke="#6d5a5a" stroke-width="1.2"/></svg><div class="t" style="left:23.3px;top:354.45px;font-size:10px;color:#4a4a4a;">安全</div><svg style="left:246.5px;top:353.95px" width="60" height="10"><path transform="translate(0.0,0)" d="M5.00 0.10L6.44 3.32L9.95 3.69L7.33 6.06L8.06 9.51L5.00 7.75L1.94 9.51L2.67 6.06L0.05 3.69L3.56 3.32Z" fill="#1a67b5"/><path transform="translate(11.6,0)" d="M5.00 0.10L6.44 3.32L9.95 3.69L7.33 6.06L8.06 9.51L5.00 7.75L1.94 9.51L2.67 6.06L0.05 3.69L3.56 3.32Z" fill="#1a67b5"/><path transform="translate(23.2,0)" d="M5.00 0.10L6.44 3.32L9.95 3.69L7.33 6.06L8.06 9.51L5.00 7.75L1.94 9.51L2.67 6.06L0.05 3.69L3.56 3.32Z" fill="#1a67b5"/><path transform="translate(34.8,0)" d="M5.00 0.10L6.44 3.32L9.95 3.69L7.33 6.06L8.06 9.51L5.00 7.75L1.94 9.51L2.67 6.06L0.05 3.69L3.56 3.32Z" fill="#b9b9b9"/><path transform="translate(46.4,0)" d="M5.00 0.10L6.44 3.32L9.95 3.69L7.33 6.06L8.06 9.51L5.00 7.75L1.94 9.51L2.67 6.06L0.05 3.69L3.56 3.32Z" fill="#b9b9b9"/></svg><div class="t" style="left:431.2px;top:354.85px;font-size:10px;color:#505050;letter-spacing:0.27px;-webkit-text-stroke:0.2px #505050">00:00:00</div><svg style="left:664px;top:350.75px" width="16" height="16"><circle cx="8" cy="8" r="6.1" fill="none" stroke="#bdbdbd" stroke-width="2.8"/></svg><div class="t" style="left:689px;top:354.85px;font-size:10px;color:#505050;letter-spacing:0.3px;-webkit-text-stroke:0.2px #505050">0%</div><svg style="left:1002.5px;top:354.25px" width="86" height="8"><rect x="0.0" y="0" width="15.5" height="8" fill="#a9a9a9"/><rect x="17.4" y="0" width="15.5" height="8" fill="#a9a9a9"/><rect x="34.8" y="0" width="15.5" height="8" fill="#a9a9a9"/><rect x="52.199999999999996" y="0" width="15.5" height="8" fill="#a9a9a9"/><rect x="69.6" y="0" width="15.5" height="8" fill="#a9a9a9"/></svg><svg style="left:1224px;top:357.05px" width="16" height="5"><circle cx="2.9" cy="2.1" r="1.9" fill="#1a67b5"/><circle cx="7.6" cy="2.1" r="1.9" fill="#1a67b5"/><circle cx="12.3" cy="2.1" r="1.9" fill="#1a67b5"/></svg><div class="a" style="left:0;top:372.5px;width:1242px;height:28.5px;background:#f9f9f9"></div><svg style="left:3px;top:377px" width="20" height="20" viewBox="0 0 20 20"><rect x="3.8" y="3.6" width="12.2" height="12.4" fill="#fff" stroke="#b9bcc0" stroke-width="1"/><path d="M4.3 15.5L7.5 8.5L10 12L11.6 10.2L15.5 15.5Z" fill="#3f9a6e"/><circle cx="11.6" cy="7" r="1.4" fill="#ec9a6a"/></svg><div class="t" style="left:23.3px;top:382.95px;font-size:10px;color:#4a4a4a;">图片</div><svg style="left:246.5px;top:382.45px" width="60" height="10"><path transform="translate(0.0,0)" d="M5.00 0.10L6.44 3.32L9.95 3.69L7.33 6.06L8.06 9.51L5.00 7.75L1.94 9.51L2.67 6.06L0.05 3.69L3.56 3.32Z" fill="#1a67b5"/><path transform="translate(11.6,0)" d="M5.00 0.10L6.44 3.32L9.95 3.69L7.33 6.06L8.06 9.51L5.00 7.75L1.94 9.51L2.67 6.06L0.05 3.69L3.56 3.32Z" fill="#1a67b5"/><path transform="translate(23.2,0)" d="M5.00 0.10L6.44 3.32L9.95 3.69L7.33 6.06L8.06 9.51L5.00 7.75L1.94 9.51L2.67 6.06L0.05 3.69L3.56 3.32Z" fill="#1a67b5"/><path transform="translate(34.8,0)" d="M5.00 0.10L6.44 3.32L9.95 3.69L7.33 6.06L8.06 9.51L5.00 7.75L1.94 9.51L2.67 6.06L0.05 3.69L3.56 3.32Z" fill="#b9b9b9"/><path transform="translate(46.4,0)" d="M5.00 0.10L6.44 3.32L9.95 3.69L7.33 6.06L8.06 9.51L5.00 7.75L1.94 9.51L2.67 6.06L0.05 3.69L3.56 3.32Z" fill="#b9b9b9"/></svg><div class="t" style="left:431.2px;top:383.35px;font-size:10px;color:#505050;letter-spacing:0.27px;-webkit-text-stroke:0.2px #505050">00:00:00</div><svg style="left:664px;top:379.25px" width="16" height="16"><circle cx="8" cy="8" r="6.1" fill="none" stroke="#bdbdbd" stroke-width="2.8"/></svg><div class="t" style="left:689px;top:383.35px;font-size:10px;color:#505050;letter-spacing:0.3px;-webkit-text-stroke:0.2px #505050">0%</div><svg style="left:1002.5px;top:382.75px" width="86" height="8"><rect x="0.0" y="0" width="15.5" height="8" fill="#a9a9a9"/><rect x="17.4" y="0" width="15.5" height="8" fill="#a9a9a9"/><rect x="34.8" y="0" width="15.5" height="8" fill="#a9a9a9"/><rect x="52.199999999999996" y="0" width="15.5" height="8" fill="#a9a9a9"/><rect x="69.6" y="0" width="15.5" height="8" fill="#a9a9a9"/></svg><div class="a" style="left:0;top:401.0px;width:1242px;height:28.5px;background:#ffffff"></div><svg style="left:3px;top:406px" width="20" height="20" viewBox="0 0 20 20"><path d="M5.6 4.5Q3.6 5.4 4.4 7.6Q5.8 8.8 7.4 8L14.5 15" fill="none" stroke="#4b4b4b" stroke-width="1.5"/><path d="M7.2 5.2L8.3 6.5" stroke="#4b4b4b" stroke-width="1.4"/><path d="M10.8 5.2Q13.6 3.8 15.4 7.4L14 8.6L12.6 7.4Z" fill="#4b4b4b"/><path d="M12.2 7.2L9.5 10.2" stroke="#4b4b4b" stroke-width="1.4"/><path d="M9.3 10.6L4.6 15" stroke="#2f4f78" stroke-width="2"/></svg><div class="t" style="left:23.3px;top:411.45px;font-size:10px;color:#4a4a4a;">工具</div><svg style="left:246.5px;top:410.95px" width="60" height="10"><path transform="translate(0.0,0)" d="M5.00 0.10L6.44 3.32L9.95 3.69L7.33 6.06L8.06 9.51L5.00 7.75L1.94 9.51L2.67 6.06L0.05 3.69L3.56 3.32Z" fill="#1a67b5"/><path transform="translate(11.6,0)" d="M5.00 0.10L6.44 3.32L9.95 3.69L7.33 6.06L8.06 9.51L5.00 7.75L1.94 9.51L2.67 6.06L0.05 3.69L3.56 3.32Z" fill="#1a67b5"/><path transform="translate(23.2,0)" d="M5.00 0.10L6.44 3.32L9.95 3.69L7.33 6.06L8.06 9.51L5.00 7.75L1.94 9.51L2.67 6.06L0.05 3.69L3.56 3.32Z" fill="#1a67b5"/><path transform="translate(34.8,0)" d="M5.00 0.10L6.44 3.32L9.95 3.69L7.33 6.06L8.06 9.51L5.00 7.75L1.94 9.51L2.67 6.06L0.05 3.69L3.56 3.32Z" fill="#b9b9b9"/><path transform="translate(46.4,0)" d="M5.00 0.10L6.44 3.32L9.95 3.69L7.33 6.06L8.06 9.51L5.00 7.75L1.94 9.51L2.67 6.06L0.05 3.69L3.56 3.32Z" fill="#b9b9b9"/></svg><div class="t" style="left:431.2px;top:411.85px;font-size:10px;color:#505050;letter-spacing:0.27px;-webkit-text-stroke:0.2px #505050">00:00:00</div><svg style="left:664px;top:407.75px" width="16" height="16"><circle cx="8" cy="8" r="6.1" fill="none" stroke="#bdbdbd" stroke-width="2.8"/></svg><div class="t" style="left:689px;top:411.85px;font-size:10px;color:#505050;letter-spacing:0.3px;-webkit-text-stroke:0.2px #505050">0%</div><svg style="left:1002.5px;top:411.25px" width="86" height="8"><rect x="0.0" y="0" width="15.5" height="8" fill="#a9a9a9"/><rect x="17.4" y="0" width="15.5" height="8" fill="#a9a9a9"/><rect x="34.8" y="0" width="15.5" height="8" fill="#a9a9a9"/><rect x="52.199999999999996" y="0" width="15.5" height="8" fill="#a9a9a9"/><rect x="69.6" y="0" width="15.5" height="8" fill="#a9a9a9"/></svg><div class="a" style="left:0;top:429.5px;width:1242px;height:28.5px;background:#f9f9f9"></div><svg style="left:3px;top:434px" width="20" height="20" viewBox="0 0 20 20"><circle cx="10" cy="10" r="6.4" fill="#d5e6f7" stroke="#3d638c" stroke-width="1.2"/><ellipse cx="10" cy="10" rx="2.6" ry="6.4" fill="none" stroke="#3d638c" stroke-width="1"/><path d="M3.8 8H16.2M3.8 12H16.2" stroke="#3d638c" stroke-width="1"/></svg><div class="t" style="left:23.3px;top:439.95px;font-size:10px;color:#4a4a4a;">浏览器</div><svg style="left:246.5px;top:439.45px" width="60" height="10"><path transform="translate(0.0,0)" d="M5.00 0.10L6.44 3.32L9.95 3.69L7.33 6.06L8.06 9.51L5.00 7.75L1.94 9.51L2.67 6.06L0.05 3.69L3.56 3.32Z" fill="#1a67b5"/><path transform="translate(11.6,0)" d="M5.00 0.10L6.44 3.32L9.95 3.69L7.33 6.06L8.06 9.51L5.00 7.75L1.94 9.51L2.67 6.06L0.05 3.69L3.56 3.32Z" fill="#1a67b5"/><path transform="translate(23.2,0)" d="M5.00 0.10L6.44 3.32L9.95 3.69L7.33 6.06L8.06 9.51L5.00 7.75L1.94 9.51L2.67 6.06L0.05 3.69L3.56 3.32Z" fill="#b9b9b9"/><path transform="translate(34.8,0)" d="M5.00 0.10L6.44 3.32L9.95 3.69L7.33 6.06L8.06 9.51L5.00 7.75L1.94 9.51L2.67 6.06L0.05 3.69L3.56 3.32Z" fill="#b9b9b9"/><path transform="translate(46.4,0)" d="M5.00 0.10L6.44 3.32L9.95 3.69L7.33 6.06L8.06 9.51L5.00 7.75L1.94 9.51L2.67 6.06L0.05 3.69L3.56 3.32Z" fill="#b9b9b9"/></svg><div class="t" style="left:431.2px;top:440.35px;font-size:10px;color:#505050;letter-spacing:0.27px;-webkit-text-stroke:0.2px #505050">00:00:00</div><svg style="left:664px;top:436.25px" width="16" height="16"><circle cx="8" cy="8" r="6.1" fill="none" stroke="#bdbdbd" stroke-width="2.8"/></svg><div class="t" style="left:689px;top:440.35px;font-size:10px;color:#505050;letter-spacing:0.3px;-webkit-text-stroke:0.2px #505050">0%</div><svg style="left:1002.5px;top:439.75px" width="86" height="8"><rect x="0.0" y="0" width="15.5" height="8" fill="#a9a9a9"/><rect x="17.4" y="0" width="15.5" height="8" fill="#a9a9a9"/><rect x="34.8" y="0" width="15.5" height="8" fill="#a9a9a9"/><rect x="52.199999999999996" y="0" width="15.5" height="8" fill="#a9a9a9"/><rect x="69.6" y="0" width="15.5" height="8" fill="#a9a9a9"/></svg><div class="a" style="left:0;top:458.0px;width:1242px;height:28.5px;background:#ffffff"></div><svg style="left:3px;top:463px" width="20" height="20" viewBox="0 0 20 20"><path d="M11.8 7.8L13.2 9.2L4.8 15.8L4.2 15.2Z" fill="#3d5d9a" stroke="#3d5d9a" stroke-width="0.8" stroke-linejoin="round"/><circle cx="13.6" cy="6" r="2.6" fill="#2b5b86"/></svg><div class="t" style="left:23.3px;top:468.45px;font-size:10px;color:#4a4a4a;">娱乐</div><svg style="left:246.5px;top:467.95px" width="60" height="10"><path transform="translate(0.0,0)" d="M5.00 0.10L6.44 3.32L9.95 3.69L7.33 6.06L8.06 9.51L5.00 7.75L1.94 9.51L2.67 6.06L0.05 3.69L3.56 3.32Z" fill="#1a67b5"/><path transform="translate(11.6,0)" d="M5.00 0.10L6.44 3.32L9.95 3.69L7.33 6.06L8.06 9.51L5.00 7.75L1.94 9.51L2.67 6.06L0.05 3.69L3.56 3.32Z" fill="#b9b9b9"/><path transform="translate(23.2,0)" d="M5.00 0.10L6.44 3.32L9.95 3.69L7.33 6.06L8.06 9.51L5.00 7.75L1.94 9.51L2.67 6.06L0.05 3.69L3.56 3.32Z" fill="#b9b9b9"/><path transform="translate(34.8,0)" d="M5.00 0.10L6.44 3.32L9.95 3.69L7.33 6.06L8.06 9.51L5.00 7.75L1.94 9.51L2.67 6.06L0.05 3.69L3.56 3.32Z" fill="#b9b9b9"/><path transform="translate(46.4,0)" d="M5.00 0.10L6.44 3.32L9.95 3.69L7.33 6.06L8.06 9.51L5.00 7.75L1.94 9.51L2.67 6.06L0.05 3.69L3.56 3.32Z" fill="#b9b9b9"/></svg><div class="t" style="left:431.2px;top:468.85px;font-size:10px;color:#505050;letter-spacing:0.27px;-webkit-text-stroke:0.2px #505050">00:00:00</div><svg style="left:664px;top:464.75px" width="16" height="16"><circle cx="8" cy="8" r="6.1" fill="none" stroke="#bdbdbd" stroke-width="2.8"/></svg><div class="t" style="left:689px;top:468.85px;font-size:10px;color:#505050;letter-spacing:0.3px;-webkit-text-stroke:0.2px #505050">0%</div><svg style="left:1002.5px;top:468.25px" width="86" height="8"><rect x="0.0" y="0" width="15.5" height="8" fill="#a9a9a9"/><rect x="17.4" y="0" width="15.5" height="8" fill="#a9a9a9"/><rect x="34.8" y="0" width="15.5" height="8" fill="#a9a9a9"/><rect x="52.199999999999996" y="0" width="15.5" height="8" fill="#a9a9a9"/><rect x="69.6" y="0" width="15.5" height="8" fill="#a9a9a9"/></svg><div class="a" style="left:0;top:486.5px;width:1242px;height:28.5px;background:#f9f9f9"></div><svg style="left:3px;top:491px" width="20" height="20" viewBox="0 0 20 20"><path d="M7.2 5.8V3.8H12.6V5.8" fill="none" stroke="#6b7a8c" stroke-width="1.1"/><rect x="3.3" y="5.8" width="13" height="9.7" fill="#3d6db3"/><circle cx="6.7" cy="10" r="1.3" fill="none" stroke="#cfe3fa" stroke-width="0.9"/><circle cx="13" cy="10" r="1.3" fill="none" stroke="#cfe3fa" stroke-width="0.9"/><path d="M8 10H11.7" stroke="#cfe3fa" stroke-width="0.8"/></svg><div class="t" style="left:23.3px;top:496.95px;font-size:10px;color:#4a4a4a;">办公</div><svg style="left:246.5px;top:496.45px" width="60" height="10"><path transform="translate(0.0,0)" d="M5.00 0.10L6.44 3.32L9.95 3.69L7.33 6.06L8.06 9.51L5.00 7.75L1.94 9.51L2.67 6.06L0.05 3.69L3.56 3.32Z" fill="#1a67b5"/><path transform="translate(11.6,0)" d="M5.00 0.10L6.44 3.32L9.95 3.69L7.33 6.06L8.06 9.51L5.00 7.75L1.94 9.51L2.67 6.06L0.05 3.69L3.56 3.32Z" fill="#1a67b5"/><path transform="translate(23.2,0)" d="M5.00 0.10L6.44 3.32L9.95 3.69L7.33 6.06L8.06 9.51L5.00 7.75L1.94 9.51L2.67 6.06L0.05 3.69L3.56 3.32Z" fill="#1a67b5"/><path transform="translate(34.8,0)" d="M5.00 0.10L6.44 3.32L9.95 3.69L7.33 6.06L8.06 9.51L5.00 7.75L1.94 9.51L2.67 6.06L0.05 3.69L3.56 3.32Z" fill="#1a67b5"/><path transform="translate(46.4,0)" d="M5.00 0.10L6.44 3.32L9.95 3.69L7.33 6.06L8.06 9.51L5.00 7.75L1.94 9.51L2.67 6.06L0.05 3.69L3.56 3.32Z" fill="#1a67b5"/></svg><div class="t" style="left:431.2px;top:497.35px;font-size:10px;color:#505050;letter-spacing:0.27px;-webkit-text-stroke:0.2px #505050">00:00:00</div><svg style="left:664px;top:493.25px" width="16" height="16"><circle cx="8" cy="8" r="6.1" fill="none" stroke="#bdbdbd" stroke-width="2.8"/></svg><div class="t" style="left:689px;top:497.35px;font-size:10px;color:#505050;letter-spacing:0.3px;-webkit-text-stroke:0.2px #505050">0%</div><svg style="left:1002.5px;top:496.75px" width="86" height="8"><rect x="0.0" y="0" width="15.5" height="8" fill="#a9a9a9"/><rect x="17.4" y="0" width="15.5" height="8" fill="#a9a9a9"/><rect x="34.8" y="0" width="15.5" height="8" fill="#a9a9a9"/><rect x="52.199999999999996" y="0" width="15.5" height="8" fill="#a9a9a9"/><rect x="69.6" y="0" width="15.5" height="8" fill="#a9a9a9"/></svg><div class="a" style="left:0;top:515.0px;width:1242px;height:28.5px;background:#ffffff"></div><svg style="left:3px;top:520px" width="20" height="20" viewBox="0 0 20 20"><rect x="3.3" y="3.8" width="12.8" height="11.7" fill="#5b5f66"/><rect x="3.3" y="3.8" width="12.8" height="2.8" fill="#3a5a8f"/><rect x="5" y="10.5" width="6.5" height="2.2" fill="#dcdcdc"/></svg><div class="t" style="left:23.3px;top:525.45px;font-size:10px;color:#4a4a4a;">编程</div><svg style="left:246.5px;top:524.95px" width="60" height="10"><path transform="translate(0.0,0)" d="M5.00 0.10L6.44 3.32L9.95 3.69L7.33 6.06L8.06 9.51L5.00 7.75L1.94 9.51L2.67 6.06L0.05 3.69L3.56 3.32Z" fill="#1a67b5"/><path transform="translate(11.6,0)" d="M5.00 0.10L6.44 3.32L9.95 3.69L7.33 6.06L8.06 9.51L5.00 7.75L1.94 9.51L2.67 6.06L0.05 3.69L3.56 3.32Z" fill="#1a67b5"/><path transform="translate(23.2,0)" d="M5.00 0.10L6.44 3.32L9.95 3.69L7.33 6.06L8.06 9.51L5.00 7.75L1.94 9.51L2.67 6.06L0.05 3.69L3.56 3.32Z" fill="#1a67b5"/><path transform="translate(34.8,0)" d="M5.00 0.10L6.44 3.32L9.95 3.69L7.33 6.06L8.06 9.51L5.00 7.75L1.94 9.51L2.67 6.06L0.05 3.69L3.56 3.32Z" fill="#1a67b5"/><path transform="translate(46.4,0)" d="M5.00 0.10L6.44 3.32L9.95 3.69L7.33 6.06L8.06 9.51L5.00 7.75L1.94 9.51L2.67 6.06L0.05 3.69L3.56 3.32Z" fill="#1a67b5"/></svg><div class="t" style="left:431.2px;top:525.85px;font-size:10px;color:#505050;letter-spacing:0.27px;-webkit-text-stroke:0.2px #505050">00:00:00</div><svg style="left:664px;top:521.75px" width="16" height="16"><circle cx="8" cy="8" r="6.1" fill="none" stroke="#bdbdbd" stroke-width="2.8"/></svg><div class="t" style="left:689px;top:525.85px;font-size:10px;color:#505050;letter-spacing:0.3px;-webkit-text-stroke:0.2px #505050">0%</div><svg style="left:1002.5px;top:525.25px" width="86" height="8"><rect x="0.0" y="0" width="15.5" height="8" fill="#a9a9a9"/><rect x="17.4" y="0" width="15.5" height="8" fill="#a9a9a9"/><rect x="34.8" y="0" width="15.5" height="8" fill="#a9a9a9"/><rect x="52.199999999999996" y="0" width="15.5" height="8" fill="#a9a9a9"/><rect x="69.6" y="0" width="15.5" height="8" fill="#a9a9a9"/></svg><div class="a" style="left:0;top:543.5px;width:1242px;height:28.5px;background:#f9f9f9"></div><svg style="left:3px;top:548px" width="20" height="20" viewBox="0 0 20 20"><path transform="translate(10 10.4) scale(0.7)" d="M0 -9.5L2.6 -3.2L9.2 -2.9L4.2 1.4L5.8 7.9L0 4.3L-5.8 7.9L-4.2 1.4L-9.2 -2.9L-2.6 -3.2Z" fill="#f0b445"/></svg><div class="t" style="left:23.3px;top:553.95px;font-size:10px;color:#4a4a4a;">我的关注</div><svg style="left:246.5px;top:553.45px" width="60" height="10"><path transform="translate(0.0,0)" d="M5.00 0.10L6.44 3.32L9.95 3.69L7.33 6.06L8.06 9.51L5.00 7.75L1.94 9.51L2.67 6.06L0.05 3.69L3.56 3.32Z" fill="#1a67b5"/><path transform="translate(11.6,0)" d="M5.00 0.10L6.44 3.32L9.95 3.69L7.33 6.06L8.06 9.51L5.00 7.75L1.94 9.51L2.67 6.06L0.05 3.69L3.56 3.32Z" fill="#1a67b5"/><path transform="translate(23.2,0)" d="M5.00 0.10L6.44 3.32L9.95 3.69L7.33 6.06L8.06 9.51L5.00 7.75L1.94 9.51L2.67 6.06L0.05 3.69L3.56 3.32Z" fill="#1a67b5"/><path transform="translate(34.8,0)" d="M5.00 0.10L6.44 3.32L9.95 3.69L7.33 6.06L8.06 9.51L5.00 7.75L1.94 9.51L2.67 6.06L0.05 3.69L3.56 3.32Z" fill="#b9b9b9"/><path transform="translate(46.4,0)" d="M5.00 0.10L6.44 3.32L9.95 3.69L7.33 6.06L8.06 9.51L5.00 7.75L1.94 9.51L2.67 6.06L0.05 3.69L3.56 3.32Z" fill="#b9b9b9"/></svg><div class="t" style="left:431.2px;top:554.35px;font-size:10px;color:#505050;letter-spacing:0.27px;-webkit-text-stroke:0.2px #505050">00:00:00</div><svg style="left:664px;top:550.25px" width="16" height="16"><circle cx="8" cy="8" r="6.1" fill="none" stroke="#bdbdbd" stroke-width="2.8"/></svg><div class="t" style="left:689px;top:554.35px;font-size:10px;color:#505050;letter-spacing:0.3px;-webkit-text-stroke:0.2px #505050">0%</div><svg style="left:1002.5px;top:553.75px" width="86" height="8"><rect x="0.0" y="0" width="15.5" height="8" fill="#a9a9a9"/><rect x="17.4" y="0" width="15.5" height="8" fill="#a9a9a9"/><rect x="34.8" y="0" width="15.5" height="8" fill="#a9a9a9"/><rect x="52.199999999999996" y="0" width="15.5" height="8" fill="#a9a9a9"/><rect x="69.6" y="0" width="15.5" height="8" fill="#a9a9a9"/></svg><div class="a" style="left:0;top:572.0px;width:1242px;height:28.5px;background:#ffffff"></div><svg style="left:3px;top:577px" width="20" height="20" viewBox="0 0 20 20"><path d="M5 6.2H14.8M5 9.9H14.8M5 13H14.8" stroke="#555" stroke-width="1.4"/></svg><div class="t" style="left:23.3px;top:582.45px;font-size:10px;color:#4a4a4a;">其他</div><svg style="left:246.5px;top:581.95px" width="60" height="10"><path transform="translate(0.0,0)" d="M5.00 0.10L6.44 3.32L9.95 3.69L7.33 6.06L8.06 9.51L5.00 7.75L1.94 9.51L2.67 6.06L0.05 3.69L3.56 3.32Z" fill="#1a67b5"/><path transform="translate(11.6,0)" d="M5.00 0.10L6.44 3.32L9.95 3.69L7.33 6.06L8.06 9.51L5.00 7.75L1.94 9.51L2.67 6.06L0.05 3.69L3.56 3.32Z" fill="#b9b9b9"/><path transform="translate(23.2,0)" d="M5.00 0.10L6.44 3.32L9.95 3.69L7.33 6.06L8.06 9.51L5.00 7.75L1.94 9.51L2.67 6.06L0.05 3.69L3.56 3.32Z" fill="#b9b9b9"/><path transform="translate(34.8,0)" d="M5.00 0.10L6.44 3.32L9.95 3.69L7.33 6.06L8.06 9.51L5.00 7.75L1.94 9.51L2.67 6.06L0.05 3.69L3.56 3.32Z" fill="#b9b9b9"/><path transform="translate(46.4,0)" d="M5.00 0.10L6.44 3.32L9.95 3.69L7.33 6.06L8.06 9.51L5.00 7.75L1.94 9.51L2.67 6.06L0.05 3.69L3.56 3.32Z" fill="#b9b9b9"/></svg><div class="t" style="left:431.2px;top:582.85px;font-size:10px;color:#505050;letter-spacing:0.27px;-webkit-text-stroke:0.2px #505050">00:00:00</div><svg style="left:664px;top:578.75px" width="16" height="16"><circle cx="8" cy="8" r="6.1" fill="none" stroke="#bdbdbd" stroke-width="2.8"/></svg><div class="t" style="left:689px;top:582.85px;font-size:10px;color:#505050;letter-spacing:0.3px;-webkit-text-stroke:0.2px #505050">0%</div><svg style="left:1002.5px;top:582.25px" width="86" height="8"><rect x="0.0" y="0" width="15.5" height="8" fill="#a9a9a9"/><rect x="17.4" y="0" width="15.5" height="8" fill="#a9a9a9"/><rect x="34.8" y="0" width="15.5" height="8" fill="#a9a9a9"/><rect x="52.199999999999996" y="0" width="15.5" height="8" fill="#a9a9a9"/><rect x="69.6" y="0" width="15.5" height="8" fill="#a9a9a9"/></svg><div class="a" style="left:1238.6px;top:173px;width:3.4px;height:363px;background:#fff"></div><div class="a" style="left:1239px;top:175px;width:1.6px;height:361px;background:#5f5f5f"></div><div class="a" style="left:0;top:591.5px;width:1242px;height:15.5px;background:#fdfdfd"></div><svg style="left:0;top:592px" width="140" height="14" viewBox="0 592 140 14"><rect x="2" y="595.8000000000001" width="0.9" height="4.8" fill="#aaaaaa"/><path d="M3.6 598.2L6.2 595.8000000000001V600.6Z" fill="#aaaaaa"/><path d="M6.4 598.2L9.0 595.8000000000001V600.6Z" fill="#aaaaaa"/><path d="M15.5 598.2L18.1 595.8000000000001V600.6Z" fill="#aaaaaa"/><path d="M18.3 598.2L20.900000000000002 595.8000000000001V600.6Z" fill="#aaaaaa"/><path d="M29.6 598.2L32.2 595.8000000000001V600.6Z" fill="#aaaaaa"/><path d="M112.6 598.2L110 595.8000000000001V600.6Z" fill="#aaaaaa"/><path d="M122.6 598.2L120 595.8000000000001V600.6Z" fill="#aaaaaa"/><path d="M125.39999999999999 598.2L122.8 595.8000000000001V600.6Z" fill="#aaaaaa"/><path d="M133.6 598.2L131 595.8000000000001V600.6Z" fill="#aaaaaa"/><path d="M136.4 598.2L133.8 595.8000000000001V600.6Z" fill="#aaaaaa"/><rect x="136.8" y="595.8000000000001" width="0.9" height="4.8" fill="#aaaaaa"/></svg><div class="t" style="left:42.5px;top:593.5px;font-size:10px;color:#505050;-webkit-text-stroke:0.05px #505050">记录 1 of 15</div><svg style="left:880px;top:550px" width="350" height="55" viewBox="880 550 350 55"><g fill="#fff" stroke="#ababab" stroke-width="1.3"><ellipse cx="896.4" cy="574.6" rx="3.6" ry="3.9"/><ellipse cx="903.4" cy="568.2" rx="3.5" ry="3.9"/><ellipse cx="911.2" cy="568.2" rx="3.5" ry="3.9"/><ellipse cx="918.2" cy="574.6" rx="3.6" ry="3.9"/><path d="M907.6 577Q911.5 577 916.5 583.5Q922.3 589 920.3 591.6Q918.3 593.6 907.6 592.8Q896.9 593.6 894.9 591.6Q892.9 589 898.7 583.5Q903.7 577 907.6 577Z"/></g><text x="906.8" y="590" font-size="11.5" font-weight="bold" text-anchor="middle" fill="#a5a5a5" font-family="Liberation Sans">du</text><text transform="translate(923.8 587.6) scale(0.992 1)" x="0" y="0" font-size="32.7" letter-spacing="0" fill="#fff" stroke="#a0a0a0" stroke-width="2" paint-order="stroke" font-family="Liberation Sans, sans-serif" stroke-linejoin="round">@安固电脑监控软件</text></svg><div class="a" style="left:0;top:607px;width:1242px;height:14px;background:#106ebf"></div><div class="a" style="left:0;top:607px;width:1242px;height:1px;background:#0c5c9f"></div><div class="t" style="left:6px;top:611.5px;font-size:10px;color:#e8f2fc;-webkit-text-stroke:0.1px #e8f2fc">就绪</div><svg style="left:1150px;top:606px" width="20" height="15" viewBox="1150 606 20 15"><path d="M1159.2 609.5V620" stroke="#5fb56a" stroke-width="1.8"/><path d="M1155 615.5L1159.2 619.8L1163.4 615.5" fill="none" stroke="#5fb56a" stroke-width="1.8"/></svg><div class="t" style="left:1170.4px;top:612px;font-size:9.8px;color:#e8f2fc;-webkit-text-stroke:0.1px #e8f2fc">任务中心</div><svg style="left:1220px;top:609px" width="18" height="12" viewBox="1220 609 18 12"><rect x="1222.6" y="611.8" width="11.8" height="8.4" fill="#fff"/><circle cx="1233" cy="612.8" r="0.9" fill="#333"/><rect x="1225" y="615.8" width="4" height="1.4" fill="#a08a70"/></svg></div>
</body></html>
